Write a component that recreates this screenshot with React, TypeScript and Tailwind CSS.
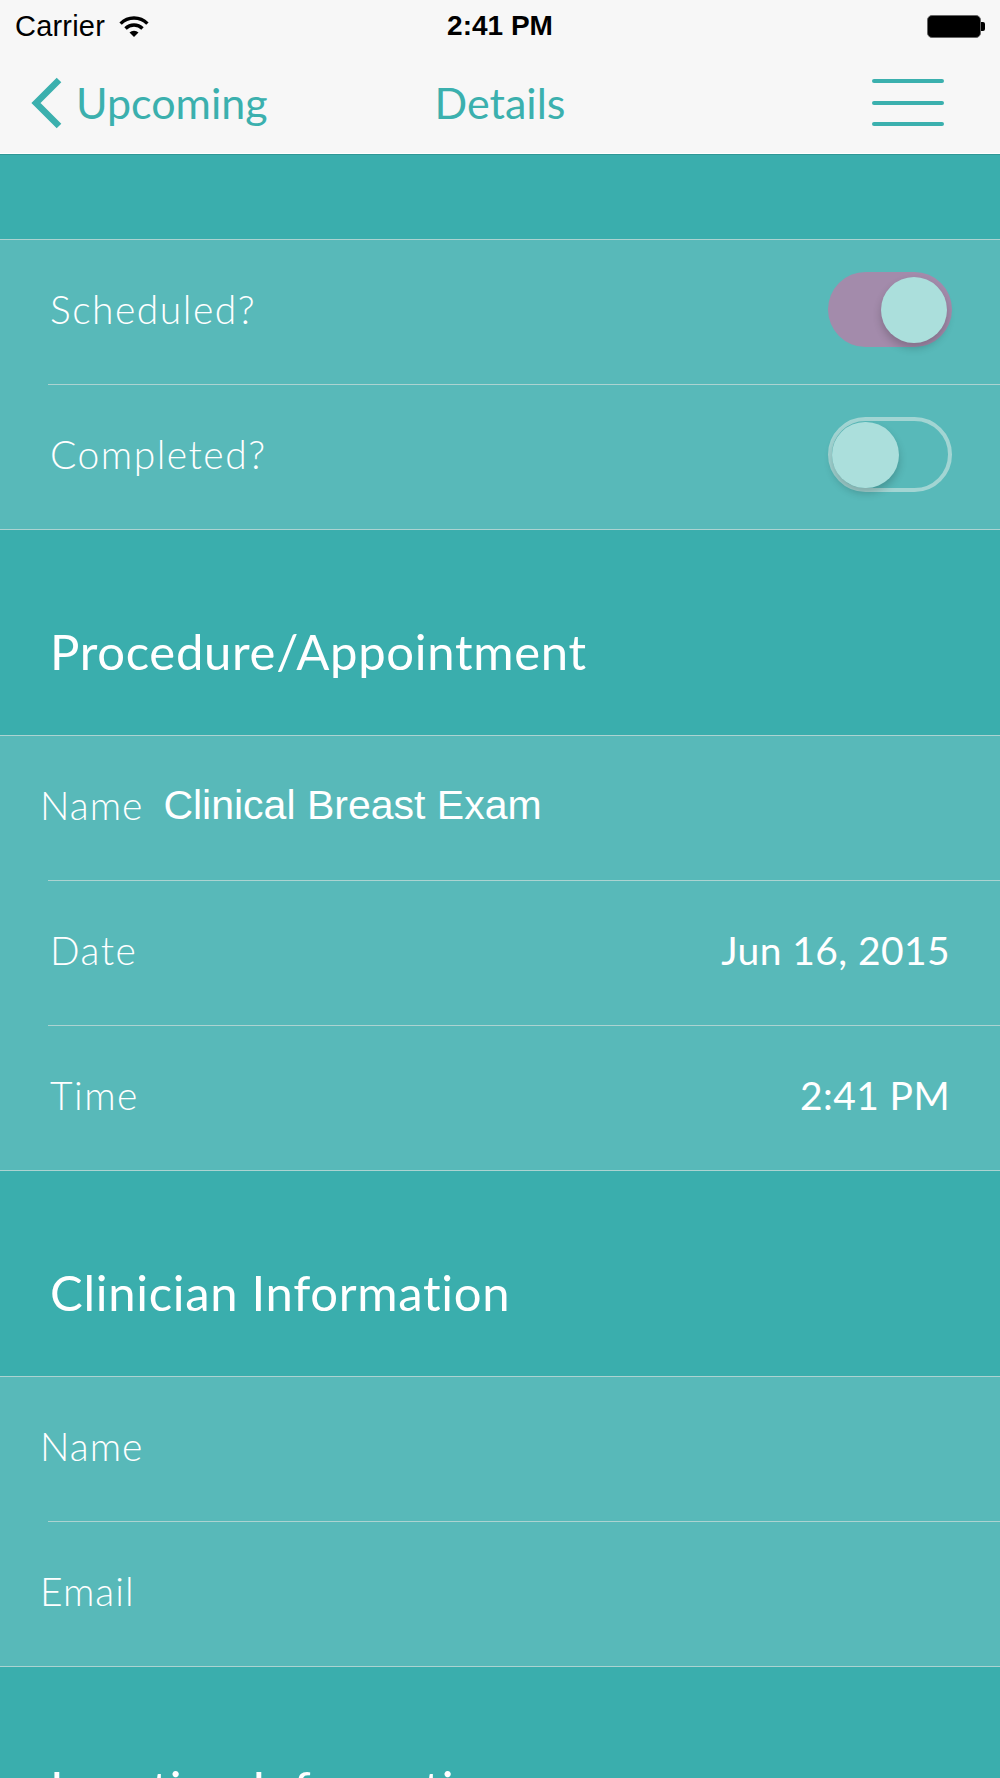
import React from "react";

const Sep = () => <div className="h-px bg-[#acd3d1] ml-[48px]" />;

function Toggle({ on }: { on: boolean }) {
  if (on) {
    return (
      <div className="w-[124px] h-[75px] rounded-full bg-[#a38bab] flex items-center justify-end pr-[5px]">
        <div className="w-[66px] h-[66px] rounded-full bg-[#abdfdc] shadow-[0_5px_8px_rgba(0,0,0,0.2)]" />
      </div>
    );
  }
  return (
    <div className="w-[124px] h-[75px] rounded-full border-[4px] border-[#a2d5d3] flex items-center">
      <div className="w-[67px] h-[66px] rounded-full bg-[#abdfdc] shadow-[0_5px_8px_rgba(0,0,0,0.2)]" />
    </div>
  );
}

function Row({ children, pl = "pl-[50px]" }: { children: React.ReactNode; pl?: string }) {
  return (
    <div className={`h-[144px] flex items-center justify-between pr-[48px] pb-[5px] ${pl}`}>{children}</div>
  );
}

function Header({ title }: { title: string }) {
  return (
    <div className="h-[205px] bg-[#3aaead] pl-[50px] pt-[97px]">
      <div className="text-[49px] leading-none text-white font-normal tracking-[0.7px]">{title}</div>
    </div>
  );
}

export default function App() {
  return (
    <div className="w-[1000px] h-[1778px] overflow-hidden bg-[#3aaead] font-[family-name:Lato,sans-serif]">
      {/* top bars */}
      <div className="h-[154px] bg-[#f7f7f7] border-b border-white">
        <div className="h-[52px] grid grid-cols-3 items-center px-[15px] font-[family-name:'Liberation_Sans',Arial,sans-serif] text-black">
          <div className="flex items-center gap-[14px]">
            <span className="text-[29px] leading-none tracking-[0.2px]">Carrier</span>
            <svg width="30" height="21" viewBox="0 0 30 21">
              <path d="M1.6 7.6 A19 19 0 0 1 28.4 7.6" stroke="#000" strokeWidth="3.4" fill="none" />
              <path d="M6.5 12.5 A12 12 0 0 1 23.5 12.5" stroke="#000" strokeWidth="3.4" fill="none" />
              <path d="M15 21 L10.5 16.5 A6.4 6.4 0 0 1 19.5 16.5 Z" fill="#000" />
            </svg>
          </div>
          <div className="text-center text-[28px] leading-none font-bold">2:41 PM</div>
          <div className="flex justify-end items-center">
            <div className="w-[54px] h-[23px] rounded-[5px] border-[1.5px] border-[#666] bg-black" />
            <div className="w-[4px] h-[9px] bg-black rounded-r-[2px]" />
          </div>
        </div>
        <div className="h-[101px] grid grid-cols-[1fr_auto_1fr] items-center text-[#3bb0ae]">
          <div className="flex items-center pl-[30px] gap-[14px]">
            <svg width="32" height="52" viewBox="0 0 32 52">
              <polyline points="29,3 6,26 29,49" stroke="#3bb0ae" strokeWidth="6.5" fill="none" strokeLinejoin="miter" />
            </svg>
            <span className="text-[43px] leading-none">Upcoming</span>
          </div>
          <div className="text-[43px] leading-none">Details</div>
          <div className="flex justify-end pr-[56px]">
            <div className="flex flex-col gap-[17.5px] w-[72px]">
              <div className="h-[4px] rounded-full bg-[#3bb0ae]" />
              <div className="h-[4px] rounded-full bg-[#3bb0ae]" />
              <div className="h-[4px] rounded-full bg-[#3bb0ae]" />
            </div>
          </div>
        </div>
      </div>

      {/* teal band */}
      <div className="h-[85px] border-t border-[#2f9896] bg-[#3aaead]" />

      {/* toggles group */}
      <div className="bg-[#58b9b9] border-y border-[#acd3d1] text-white text-[39px] font-light tracking-[1.5px]">
        <Row>
          <span className="leading-none">Scheduled?</span>
          <Toggle on />
        </Row>
        <Sep />
        <Row>
          <span className="leading-none">Completed?</span>
          <Toggle on={false} />
        </Row>
      </div>

      <Header title="Procedure/Appointment" />

      <div className="bg-[#58b9b9] border-y border-[#acd3d1] text-white text-[39px] font-light tracking-[1.5px]">
        <Row pl="pl-[40px]">
          <div className="flex items-center gap-[20px]">
            <span className="leading-none tracking-[1px]">Name</span>
            <span className="leading-none text-[41px] font-normal tracking-normal font-[family-name:'Liberation_Sans',Arial,sans-serif]">
              Clinical Breast Exam
            </span>
          </div>
        </Row>
        <Sep />
        <Row>
          <span className="leading-none">Date</span>
          <span className="leading-none font-normal tracking-[0.4px] pr-[2px]">Jun 16, 2015</span>
        </Row>
        <Sep />
        <Row>
          <span className="leading-none">Time</span>
          <span className="leading-none font-normal tracking-[0.4px] pr-[2px]">2:41 PM</span>
        </Row>
      </div>

      <Header title="Clinician Information" />

      <div className="bg-[#58b9b9] border-y border-[#acd3d1] text-white text-[39px] font-light tracking-[1.5px]">
        <Row pl="pl-[40px]">
          <span className="leading-none tracking-[1px]">Name</span>
        </Row>
        <Sep />
        <Row pl="pl-[40px]">
          <span className="leading-none tracking-[1px]">Email</span>
        </Row>
      </div>

      <Header title="Location Information" />
    </div>
  );
}
